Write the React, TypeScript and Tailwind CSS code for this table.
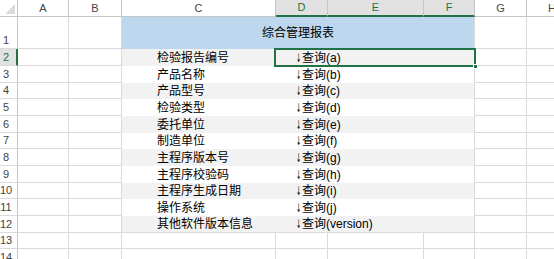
import React from "react";

const rows = [
  { label: "检验报告编号", q: "a" },
  { label: "产品名称", q: "b" },
  { label: "产品型号", q: "c" },
  { label: "检验类型", q: "d" },
  { label: "委托单位", q: "e" },
  { label: "制造单位", q: "f" },
  { label: "主程序版本号", q: "g" },
  { label: "主程序校验码", q: "h" },
  { label: "主程序生成日期", q: "i" },
  { label: "操作系统", q: "j" },
  { label: "其他软件版本信息", q: "version" },
];

// row heights after row 1 (rows 2..14)
const heights = ["h-[17px]", "h-[17px]", "h-[16px]", "h-[17px]", "h-[17px]", "h-[16px]", "h-[17px]", "h-[17px]", "h-[16px]", "h-[17px]", "h-[17px]", "h-[16px]", "h-[17px]"];

function RowHead({ n, selected, className = "" }: { n: number; selected?: boolean; className?: string }) {
  return (
    <div
      className={
        "w-[18px] shrink-0 border-b border-[#dadada] flex items-center text-[11px] " +
        (selected
          ? "bg-[#e1e1e1] text-[#217346] border-r-2 border-r-[#217346] "
          : "bg-white text-[#444] border-r border-r-[#c6c6c6] ") +
        className
      }
    >
      <span className="w-[12px] text-center leading-none">{n}</span>
    </div>
  );
}

function Blank({ w }: { w: string }) {
  return <div className={w + " shrink-0 border-r border-b border-[#dadada] bg-white"} />;
}

export default function App() {
  return (
    <div
      className="w-[554px] h-[259px] overflow-hidden bg-white text-black"
      style={{ fontFamily: '"Liberation Sans", "Noto Sans CJK SC", sans-serif' }}
    >
      {/* column headers */}
      <div className="flex h-[17px] text-[11px] text-[#444]">
        <div className="w-[18px] shrink-0 border-r border-b border-[#c6c6c6] relative bg-white">
          <svg className="absolute right-[2px] bottom-[2px]" width="10" height="10" viewBox="0 0 10 10">
            <polygon points="10,0 10,10 0,10" fill="#dcdcdc" />
          </svg>
        </div>
        <div className="w-[51px] shrink-0 border-r border-b border-[#c6c6c6] flex items-center justify-center">A</div>
        <div className="w-[53px] shrink-0 border-r border-b border-[#c6c6c6] flex items-center justify-center">B</div>
        <div className="w-[154px] shrink-0 border-r border-b border-[#c6c6c6] flex items-center justify-center">C</div>
        <div className="w-[52px] shrink-0 border-r border-[#c6c6c6] border-b-2 border-b-[#217346] bg-[#e1e1e1] text-[#217346] flex items-center justify-center">D</div>
        <div className="w-[96px] shrink-0 border-r border-[#c6c6c6] border-b-2 border-b-[#217346] bg-[#e1e1e1] text-[#217346] flex items-center justify-center">E</div>
        <div className="w-[51px] shrink-0 border-r border-[#c6c6c6] border-b-2 border-b-[#217346] bg-[#e1e1e1] text-[#217346] flex items-center justify-center">F</div>
        <div className="w-[52px] shrink-0 border-r border-b border-[#c6c6c6] flex items-center justify-center">G</div>
        <div className="flex-1 border-b border-[#c6c6c6] flex items-center pl-[21px] whitespace-nowrap overflow-hidden">H</div>
      </div>

      {/* row 1: title */}
      <div className="flex h-[32px]">
        <div className="w-[18px] shrink-0 border-r border-b border-[#c6c6c6] border-b-[#dadada] flex items-end pb-[2px] text-[11px] text-[#444]">
          <span className="w-[12px] text-center leading-none">1</span>
        </div>
        <Blank w="w-[51px]" />
        <Blank w="w-[53px]" />
        <div className="w-[353px] shrink-0 bg-[#bdd7ee] border-r border-[#dadada] flex items-center justify-center text-[12px]">
          综合管理报表
        </div>
        <Blank w="w-[52px]" />
        <div className="flex-1 border-b border-[#dadada]" />
      </div>

      {/* data rows */}
      {heights.map((h, i) => {
        const n = i + 2;
        const item = rows[i];
        const gray = n % 2 === 0;
        return (
          <div key={n} className={"flex " + h}>
            <RowHead n={n} selected={n === 2} />
            <Blank w="w-[51px]" />
            <Blank w="w-[53px]" />
            {item ? (
              <div
                className={
                  "w-[353px] shrink-0 flex text-[12px] border-r border-[#dadada] " +
                  (gray ? "bg-[#f2f2f2] " : "bg-white ") +
                  (n === 12 ? "border-b" : "")
                }
              >
                <div className="w-[154px] shrink-0 pl-[35px] flex items-center whitespace-nowrap">{item.label}</div>
                <div className="flex-1 relative pl-[20px] flex items-center whitespace-nowrap">
                  <span
                    className="inline-block w-[6px] scale-x-50 origin-left"
                    style={{ fontFamily: '"DejaVu Sans", sans-serif' }}
                  >
                    ↓
                  </span>
                  查询({item.q})
                  {n === 2 && (
                    <>
                      <div className="absolute left-[-2px] top-[-1px] right-[-2px] bottom-[-1px] border-2 border-[#217346]" />
                      <div className="absolute right-[-4px] bottom-[-3px] w-[5px] h-[5px] bg-[#217346] border border-white" />
                    </>
                  )}
                </div>
              </div>
            ) : (
              <>
                <Blank w="w-[154px]" />
                <Blank w="w-[52px]" />
                <Blank w="w-[96px]" />
                <Blank w="w-[51px]" />
              </>
            )}
            <Blank w="w-[52px]" />
            <div className="flex-1 border-b border-[#dadada]" />
          </div>
        );
      })}
    </div>
  );
}
